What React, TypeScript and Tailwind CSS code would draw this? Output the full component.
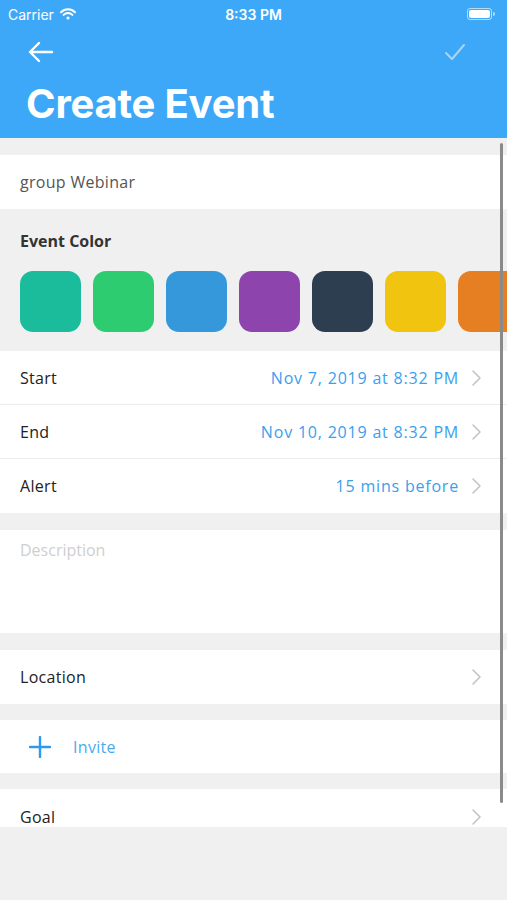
import React from "react";

const colors = ["#1abc9c", "#2ecc71", "#3498db", "#8e44ad", "#2c3e50", "#f1c40f", "#e67e22"];

const Chevron: React.FC = () => (
  <svg width="12" height="18" viewBox="0 0 12 18" fill="none" className="shrink-0">
    <path d="M2 2 L9 9 L2 16" stroke="#c4c4c4" strokeWidth="1.6" strokeLinecap="round" strokeLinejoin="round" />
  </svg>
);

const Row: React.FC<{ label: string; value?: string; border?: boolean }> = ({ label, value, border }) => (
  <div className={`h-[54px] flex items-center pl-5 pr-6 bg-white ${border ? "border-b border-[#ececec]" : ""}`}>
    <span className="text-[16px] text-[#222] tracking-[0.3px]">{label}</span>
    <span className="ml-auto mr-3 text-[16px] text-[#3aa0ee] tracking-[0.8px]">{value}</span>
    <Chevron />
  </div>
);

export default function App() {
  return (
    <div className="w-[507px] h-[900px] bg-[#f0f0f0] relative overflow-hidden" style={{ fontFamily: "'Open Sans', 'Noto Sans', sans-serif" }}>
      <div className="bg-[#3ea8f8] h-[138px] text-white">
        <div className="h-[28px] flex items-center px-2 relative" style={{ fontFamily: "Inter, sans-serif" }}>
          <span className="text-[14px] ml-0">Carrier</span>
          <svg width="16" height="12" viewBox="0 0 16 12" className="ml-1.5">
            <path d="M1 4.2 A10 10 0 0 1 15 4.2" stroke="white" strokeWidth="2" fill="none" strokeLinecap="round" />
            <path d="M3.6 6.9 A6.3 6.3 0 0 1 12.4 6.9" stroke="white" strokeWidth="2" fill="none" strokeLinecap="round" />
            <circle cx="8" cy="10" r="1.6" fill="white" />
          </svg>
          <span className="absolute left-1/2 -translate-x-1/2 text-[14px] font-semibold">8:33 PM</span>
          <div className="ml-auto mr-1 flex items-center">
            <div className="w-[25px] h-[12px] rounded-[3px] border border-white/60 p-[1px]">
              <div className="w-full h-full bg-white rounded-[2px]" />
            </div>
            <div className="w-[2px] h-[4px] bg-white/60 ml-[1px] rounded-r" />
          </div>
        </div>
        <div className="h-[48px] flex items-center px-7">
          <svg width="26" height="22" viewBox="0 0 26 22" fill="none">
            <path d="M24 11 H3 M11 2 L2 11 L11 20" stroke="white" strokeWidth="2.4" strokeLinecap="round" strokeLinejoin="round" />
          </svg>
          <svg width="22" height="18" viewBox="0 0 22 18" fill="none" className="ml-auto mr-[13px]">
            <path d="M2 10 L8 16 L20 2" stroke="#a7d5f9" strokeWidth="2" strokeLinecap="round" strokeLinejoin="round" />
          </svg>
        </div>
        <h1 className="px-[26px] pt-[4px] text-[40px] font-bold leading-[48px] tracking-[-0.2px]" style={{ fontFamily: "Inter, sans-serif" }}>
          Create Event
        </h1>
      </div>

      <div className="pt-[17px]">
        <div className="h-[54px] bg-white flex items-center px-5">
          <span className="text-[16px] text-[#555] tracking-[0.3px]">group Webinar</span>
        </div>

        <div className="pt-[20px] pb-[19px]">
          <div className="px-5 text-[16px] font-bold text-[#333]">Event Color</div>
          <div className="flex gap-[12px] pl-5 mt-[18px]">
            {colors.map(c => (
              <div key={c} className="w-[61px] h-[61px] rounded-[13px] shrink-0" style={{ backgroundColor: c }} />
            ))}
          </div>
        </div>

        <Row label="Start" value="Nov 7, 2019 at 8:32 PM" border />
        <Row label="End" value="Nov 10, 2019 at 8:32 PM" border />
        <Row label="Alert" value="15 mins before" />

        <div className="mt-[17px] h-[103px] bg-white px-5 pt-[8px]">
          <span className="text-[16px] text-[#cfcfcf]">Description</span>
        </div>

        <div className="mt-[17px]">
          <Row label="Location" />
        </div>

        <div className="mt-[16px] h-[53px] bg-white flex items-center pl-[29px]">
          <svg width="22" height="22" viewBox="0 0 22 22" fill="none">
            <path d="M11 1 V21 M1 11 H21" stroke="#2b9af0" strokeWidth="2.4" strokeLinecap="round" />
          </svg>
          <span className="ml-[22px] text-[16px] text-[#4aaaf0] tracking-[0.3px]">Invite</span>
        </div>

        <div className="mt-[16px] h-[38px] bg-white flex items-end pl-5 pr-6 overflow-hidden">
          <span className="text-[16px] text-[#222] leading-[20px] tracking-[0.3px]">Goal</span>
          <span className="ml-auto mb-[1px]"><Chevron /></span>
        </div>
      </div>

      <div className="absolute right-[4px] top-[143px] w-[3px] h-[660px] rounded-full bg-[#8a8a8a]" />
    </div>
  );
}
